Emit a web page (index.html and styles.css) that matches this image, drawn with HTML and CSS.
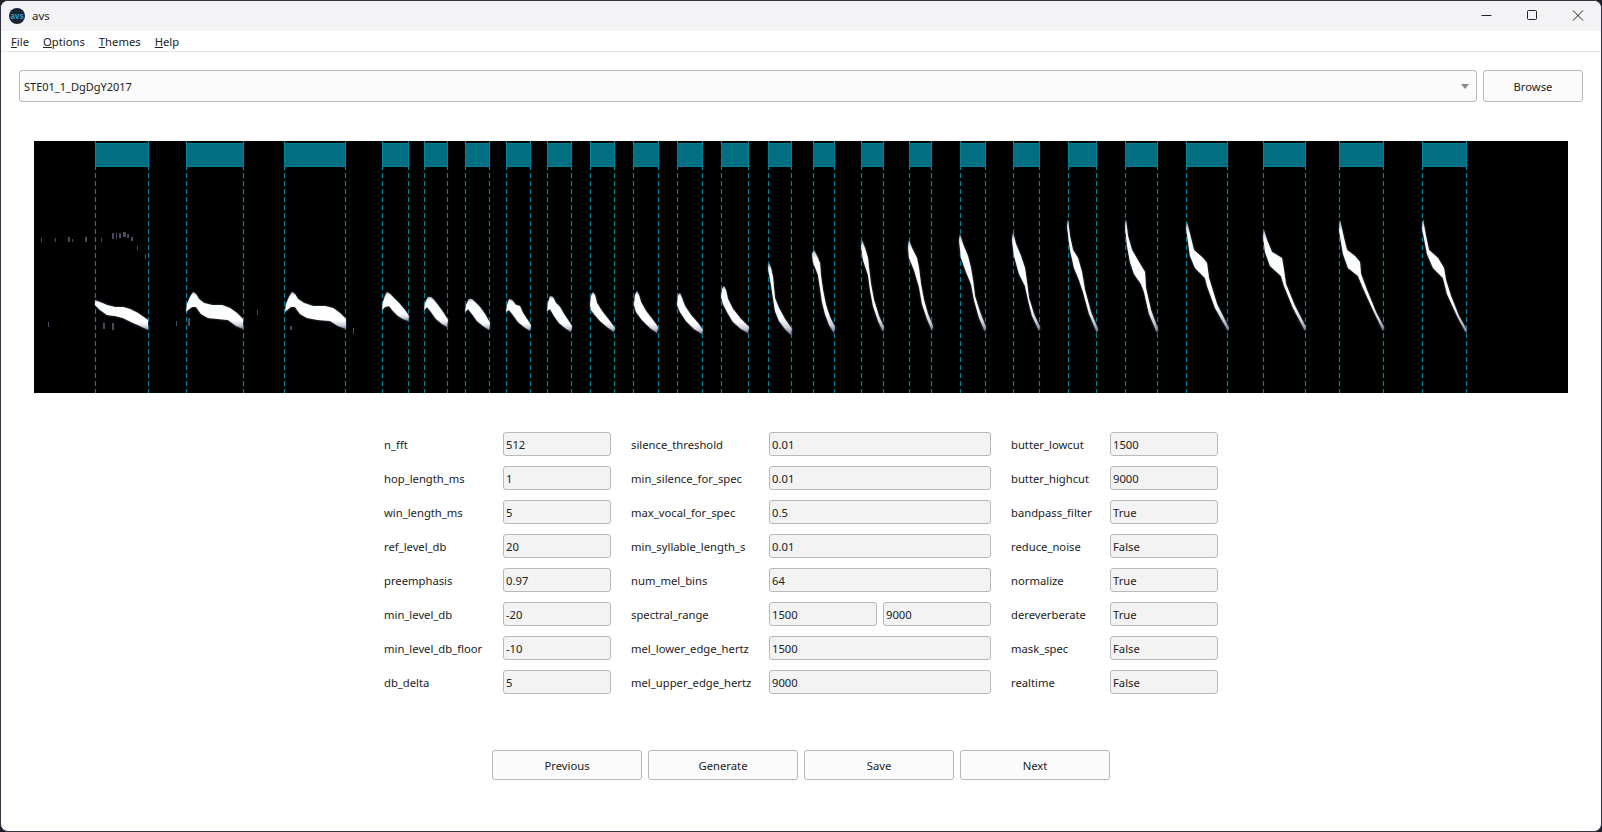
FILE: index.html
```html
<!DOCTYPE html>
<html lang="en">
<head>
<meta charset="utf-8">
<title>avs</title>
<link rel="stylesheet" href="styles.css">
</head>
<body>
<div class="window">
  <header class="titlebar">
    <div class="app-logo">avs</div>
    <div class="app-title">avs</div>
    <div class="win-controls">
      <svg class="win-btn" viewBox="0 0 46 31" width="46" height="31"><path d="M18.500 15.500H28.500" class="win-stroke"/></svg>
      <svg class="win-btn" viewBox="0 0 46 31" width="46" height="31"><rect x="18.500" y="10.500" width="9" height="9" rx="1" class="win-stroke"/></svg>
      <svg class="win-btn" viewBox="0 0 46 31" width="46" height="31"><path d="M18 10.500L28 20.500M28 10.500L18 20.500" class="win-stroke"/></svg>
    </div>
  </header>
  <nav class="menubar">
    <span class="menu-item"><u>F</u>ile</span>
    <span class="menu-item"><u>O</u>ptions</span>
    <span class="menu-item"><u>T</u>hemes</span>
    <span class="menu-item"><u>H</u>elp</span>
  </nav>
  <main class="content">
    <div class="file-row">
      <div class="combo"><span>STE01_1_DgDgY2017</span><i class="combo-arrow"></i></div>
      <div class="btn browse">Browse</div>
    </div>
    <svg class="spectrogram" viewBox="34 141 1534 252" width="1534" height="252" preserveAspectRatio="none">
      <defs>
        <filter id="glow" x="-20%" y="-20%" width="140%" height="140%">
          <feGaussianBlur in="SourceGraphic" stdDeviation="0.75" result="core"/>
          <feGaussianBlur in="SourceAlpha" stdDeviation="1.1" result="a"/>
          <feFlood flood-color="#55557a" result="c"/>
          <feComposite in="c" in2="a" operator="in" result="halo"/>
          <feMerge><feMergeNode in="halo"/><feMergeNode in="core"/></feMerge>
        </filter>
        <filter id="soft"><feGaussianBlur stdDeviation="0.7"/></filter>
        <linearGradient id="callFill" x1="0" y1="0" x2="0" y2="1">
          <stop offset="0" stop-color="#9fb4c4"/>
          <stop offset="0.1" stop-color="#fafdfd"/>
          <stop offset="0.76" stop-color="#ffffff"/>
          <stop offset="0.9" stop-color="#c9ced8"/>
          <stop offset="1" stop-color="#74748f"/>
        </linearGradient>
      </defs>
      <rect class="spec-bg" x="34" y="141" width="1534" height="252"/>
      <g class="specks" filter="url(#soft)">
        <rect x="41" y="238" width="1" height="4"/><rect x="55" y="238" width="1" height="4"/><rect x="68" y="237" width="2" height="5"/><rect x="72" y="239" width="1" height="3"/><rect x="85" y="237" width="2" height="5"/><rect x="101" y="238" width="1" height="4"/>
        <rect x="112" y="233" width="2" height="6"/><rect x="116" y="233" width="1" height="6"/><rect x="119" y="233" width="2" height="5"/><rect x="123" y="232" width="3" height="5"/><rect x="127" y="234" width="2" height="4"/><rect x="131" y="237" width="2" height="4"/><rect x="137" y="246" width="1" height="4"/><rect x="145" y="254" width="1" height="5"/>
        <rect x="103" y="323" width="2" height="6"/><rect x="112" y="323" width="2" height="7"/><rect x="48" y="322" width="1" height="5"/><rect x="176" y="321" width="1" height="5"/><rect x="188" y="318" width="2" height="8"/><rect x="257" y="310" width="1" height="5"/><rect x="290" y="326" width="2" height="4"/><rect x="353" y="328" width="1" height="6"/>
      </g>
      <g class="segs">
        <rect x="95.500" y="143.500" width="53" height="23"/><rect x="186.500" y="143.500" width="57" height="23"/><rect x="284.500" y="143.500" width="61" height="23"/><rect x="382.500" y="143.500" width="26" height="23"/><rect x="424.500" y="143.500" width="23" height="23"/><rect x="465.500" y="143.500" width="24" height="23"/><rect x="506.500" y="143.500" width="24" height="23"/><rect x="547.500" y="143.500" width="24" height="23"/><rect x="590.500" y="143.500" width="24" height="23"/><rect x="633.500" y="143.500" width="25" height="23"/><rect x="677.500" y="143.500" width="25" height="23"/><rect x="721.500" y="143.500" width="27" height="23"/><rect x="768.500" y="143.500" width="23" height="23"/><rect x="813.500" y="143.500" width="21" height="23"/><rect x="861.500" y="143.500" width="22" height="23"/><rect x="909.500" y="143.500" width="22" height="23"/><rect x="960.500" y="143.500" width="25" height="23"/><rect x="1013.500" y="143.500" width="26" height="23"/><rect x="1068.500" y="143.500" width="28" height="23"/><rect x="1125.500" y="143.500" width="32" height="23"/><rect x="1186.500" y="143.500" width="41" height="23"/><rect x="1263.500" y="143.500" width="42" height="23"/><rect x="1339.500" y="143.500" width="44" height="23"/><rect x="1422.500" y="143.500" width="44" height="23"/>
      </g>
      <path class="dashes" d="M95.500 141V393M148.500 141V393M186.500 141V393M243.500 141V393M284.500 141V393M345.500 141V393M382.500 141V393M408.500 141V393M424.500 141V393M447.500 141V393M465.500 141V393M489.500 141V393M506.500 141V393M530.500 141V393M547.500 141V393M571.500 141V393M590.500 141V393M614.500 141V393M633.500 141V393M658.500 141V393M677.500 141V393M702.500 141V393M721.500 141V393M748.500 141V393M768.500 141V393M791.500 141V393M813.500 141V393M834.500 141V393M861.500 141V393M883.500 141V393M909.500 141V393M931.500 141V393M960.500 141V393M985.500 141V393M1013.500 141V393M1039.500 141V393M1068.500 141V393M1096.500 141V393M1125.500 141V393M1157.500 141V393M1186.500 141V393M1227.500 141V393M1263.500 141V393M1305.500 141V393M1339.500 141V393M1383.500 141V393M1422.500 141V393M1466.500 141V393"/>
      <g class="calls" filter="url(#glow)">
        <polygon points="95,300 100,302 107,305 115,307 123,307 130,309 138,313 148,320 148,330 140,326 133,323 123,318 115,316 107,315 100,310 95,305"/>
        <polygon points="186,312 187,304 190,297 193,292 196,294 199,299 204,303 212,305 222,305 230,308 237,313 243,319 243,329 236,326 228,320 218,319 208,318 201,314 196,307 192,307 188,310"/>
        <polygon points="285,312 286,304 289,297 292,292 295,294 298,299 304,303 313,306 325,306 333,308 340,313 346,319 346,329 338,326 330,321 318,320 307,318 300,314 295,307 291,307 287,310"/>
        <polygon points="382,310 383,302 385,296 387,292 390,294 394,298 399,303 405,310 409,316 408,321 403,319 398,316 393,311 389,306 385,307"/>
        <polygon points="424,310 425,303 428,297 431,297 434,300 438,305 443,312 448,320 447,327 442,324 436,319 431,312 427,307"/>
        <polygon points="465,312 466,305 469,299 472,299 476,303 480,307 485,314 490,323 489,330 483,326 477,321 472,314 468,309"/>
        <polygon points="506,312 507,305 509,299 512,300 516,305 520,306 523,313 531,325 530,331 524,327 518,322 513,315 509,310"/>
        <polygon points="547,311 548,303 550,296 553,297 556,303 560,307 564,314 572,326 571,332 565,328 559,323 554,316 550,309"/>
        <polygon points="590,305 591,296 593,292 595,295 597,303 602,311 609,320 615,328 614,332 607,327 600,321 594,314 591,310"/>
        <polygon points="634,305 635,295 637,291 639,295 641,302 646,311 653,320 658,327 657,333 650,328 642,320 636,312"/>
        <polygon points="677,305 678,295 680,293 682,298 685,306 691,315 698,323 703,330 702,334 694,329 686,321 680,312"/>
        <polygon points="721,297 722,289 724,286 726,290 728,299 733,309 741,319 749,327 748,333 741,329 733,322 727,312 723,304"/>
        <polygon points="768,268 769,263 771,268 773,277 774,288 775,298 779,308 785,319 792,329 791,335 785,329 779,321 775,311 773,298 771,285"/>
        <polygon points="812,254 814,250 817,256 820,263 821,276 823,290 826,305 830,317 835,327 834,333 829,325 825,314 822,302 820,288 818,275 813,262"/>
        <polygon points="861,246 862,240 865,248 868,258 869,268 871,284 874,300 879,316 884,327 883,332 878,321 873,306 870,290 868,275 863,260"/>
        <polygon points="908,246 909,240 912,248 917,258 919,268 921,284 924,300 928,314 933,326 932,331 927,319 922,304 919,287 914,270 909,258"/>
        <polygon points="959,240 960,234 963,244 968,256 971,268 973,280 975,296 980,312 986,327 985,332 979,318 974,300 971,284 966,272 961,258"/>
        <polygon points="1012,240 1013,232 1016,244 1021,256 1025,268 1027,282 1029,298 1034,314 1040,327 1039,331 1032,316 1028,300 1025,286 1019,274 1014,256"/>
        <polygon points="1067,226 1068,219 1070,236 1073,250 1078,258 1082,272 1085,290 1091,312 1098,329 1097,333 1089,314 1083,292 1079,280 1074,268 1070,250"/>
        <polygon points="1125,226 1126,219 1128,236 1132,250 1139,262 1145,272 1146,288 1151,310 1158,329 1157,333 1149,314 1144,292 1141,284 1134,274 1130,262 1127,246"/>
        <polygon points="1186,228 1187,222 1190,234 1194,250 1203,258 1207,263 1209,278 1217,304 1229,328 1228,331 1215,308 1207,286 1205,278 1195,268 1190,256"/>
        <polygon points="1263,236 1264,230 1267,240 1272,252 1282,258 1284,270 1286,284 1295,306 1306,327 1305,331 1293,308 1284,286 1281,276 1270,266 1265,252"/>
        <polygon points="1339,230 1340,220 1344,238 1347,250 1355,256 1360,262 1361,274 1367,290 1376,312 1384,327 1383,331 1373,310 1363,288 1358,276 1348,268 1343,254"/>
        <polygon points="1422,228 1423,219 1426,236 1429,250 1438,258 1444,268 1446,280 1451,296 1459,316 1467,330 1466,333 1457,316 1447,294 1443,278 1433,268 1427,254"/>
      </g>
    </svg>
    <section class="form">
      <div class="lbl">n_fft</div><div class="inp">512</div><div class="lbl lbl-gap">silence_threshold</div><div class="inp">0.01</div><div class="lbl lbl-gap">butter_lowcut</div><div class="inp">1500</div>
      <div class="lbl">hop_length_ms</div><div class="inp">1</div><div class="lbl lbl-gap">min_silence_for_spec</div><div class="inp">0.01</div><div class="lbl lbl-gap">butter_highcut</div><div class="inp">9000</div>
      <div class="lbl">win_length_ms</div><div class="inp">5</div><div class="lbl lbl-gap">max_vocal_for_spec</div><div class="inp">0.5</div><div class="lbl lbl-gap">bandpass_filter</div><div class="inp">True</div>
      <div class="lbl">ref_level_db</div><div class="inp">20</div><div class="lbl lbl-gap">min_syllable_length_s</div><div class="inp">0.01</div><div class="lbl lbl-gap">reduce_noise</div><div class="inp">False</div>
      <div class="lbl">preemphasis</div><div class="inp">0.97</div><div class="lbl lbl-gap">num_mel_bins</div><div class="inp">64</div><div class="lbl lbl-gap">normalize</div><div class="inp">True</div>
      <div class="lbl">min_level_db</div><div class="inp">-20</div><div class="lbl lbl-gap">spectral_range</div><div class="pair"><div class="inp">1500</div><div class="inp">9000</div></div><div class="lbl lbl-gap">dereverberate</div><div class="inp">True</div>
      <div class="lbl">min_level_db_floor</div><div class="inp">-10</div><div class="lbl lbl-gap">mel_lower_edge_hertz</div><div class="inp">1500</div><div class="lbl lbl-gap">mask_spec</div><div class="inp">False</div>
      <div class="lbl">db_delta</div><div class="inp">5</div><div class="lbl lbl-gap">mel_upper_edge_hertz</div><div class="inp">9000</div><div class="lbl lbl-gap">realtime</div><div class="inp">False</div>
    </section>
    <div class="actions">
      <div class="btn action">Previous</div>
      <div class="btn action">Generate</div>
      <div class="btn action">Save</div>
      <div class="btn action">Next</div>
    </div>
  </main>
</div>
</body>
</html>
```
FILE: styles.css
```css
* { box-sizing: border-box; }
html, body { margin: 0; height: 100%; background: #1f1f2b; }
body { font-family: "Noto Sans", "Open Sans", sans-serif; font-size: 11.25px; color: #222; overflow: hidden; }
.window { width: 1602px; height: 832px; background: #fff; border: 1px solid #33333f; border-radius: 8px; overflow: hidden; }
.titlebar { height: 30px; background: #f3f3f5; display: flex; align-items: center; padding: 0 0 1px 8px; }
.app-logo { width: 16px; height: 16px; border-radius: 50%; background: #1a2430; color: #2a9bd0; font-size: 8px; font-weight: 700; line-height: 15px; text-align: center; }
.app-title { margin-left: 7px; font-size: 11.5px; color: #222; }
.win-controls { margin: -1px 0 0 auto; display: flex; }
.win-btn { display: block; }
.win-stroke { fill: none; stroke: #222; stroke-width: 1; }
.menubar { height: 21px; display: flex; align-items: center; padding-left: 10px; gap: 14px; border-bottom: 1px solid #e5e5e5; font-size: 11.25px; }
.content { padding: 18px 18px 0; }
.file-row { display: flex; gap: 6px; }
.combo { flex: 1; height: 32px; border: 1px solid #b9b9b9; border-radius: 3px; background: #fbfbfb; display: flex; align-items: center; justify-content: space-between; padding: 0 7px 0 4px; font-size: 11px; }
.combo-arrow { width: 0; height: 0; border-left: 4.5px solid transparent; border-right: 4.5px solid transparent; border-top: 5px solid #8a8a8a; }
.btn { height: 32px; border: 1px solid #b9b9b9; border-radius: 3px; background: #fbfbfb; display: flex; align-items: center; justify-content: center; }
.browse { width: 100px; }
.spectrogram { display: block; margin: 39px 15px 0; }
.spec-bg { fill: #000; }
.specks rect { fill: #4a4a60; }
.segs rect { fill: #006f82; stroke: #007f94; stroke-width: 1; }
.dashes { fill: none; stroke: #00829a; stroke-width: 1.2; stroke-dasharray: 5 3; }
.calls polygon { fill: url(#callFill); }
.form { margin: 39px 0 0 365px; display: grid; grid-template-columns: 119px 108px 158px 222px 119px 108px; grid-auto-rows: 24px; row-gap: 10px; width: 834px; }
.lbl { display: flex; align-items: center; }
.lbl-gap { padding-left: 20px; }
.inp { height: 24px; border: 1px solid #b9b9b9; border-radius: 3px; background: #f3f3f3; padding-left: 2px; display: flex; align-items: center; }
.pair { display: flex; gap: 6px; }
.pair .inp { flex: 1; }
.actions { margin: 56px 0 0 473px; display: flex; gap: 6px; }
.action { width: 150px; height: 30px; }
```
